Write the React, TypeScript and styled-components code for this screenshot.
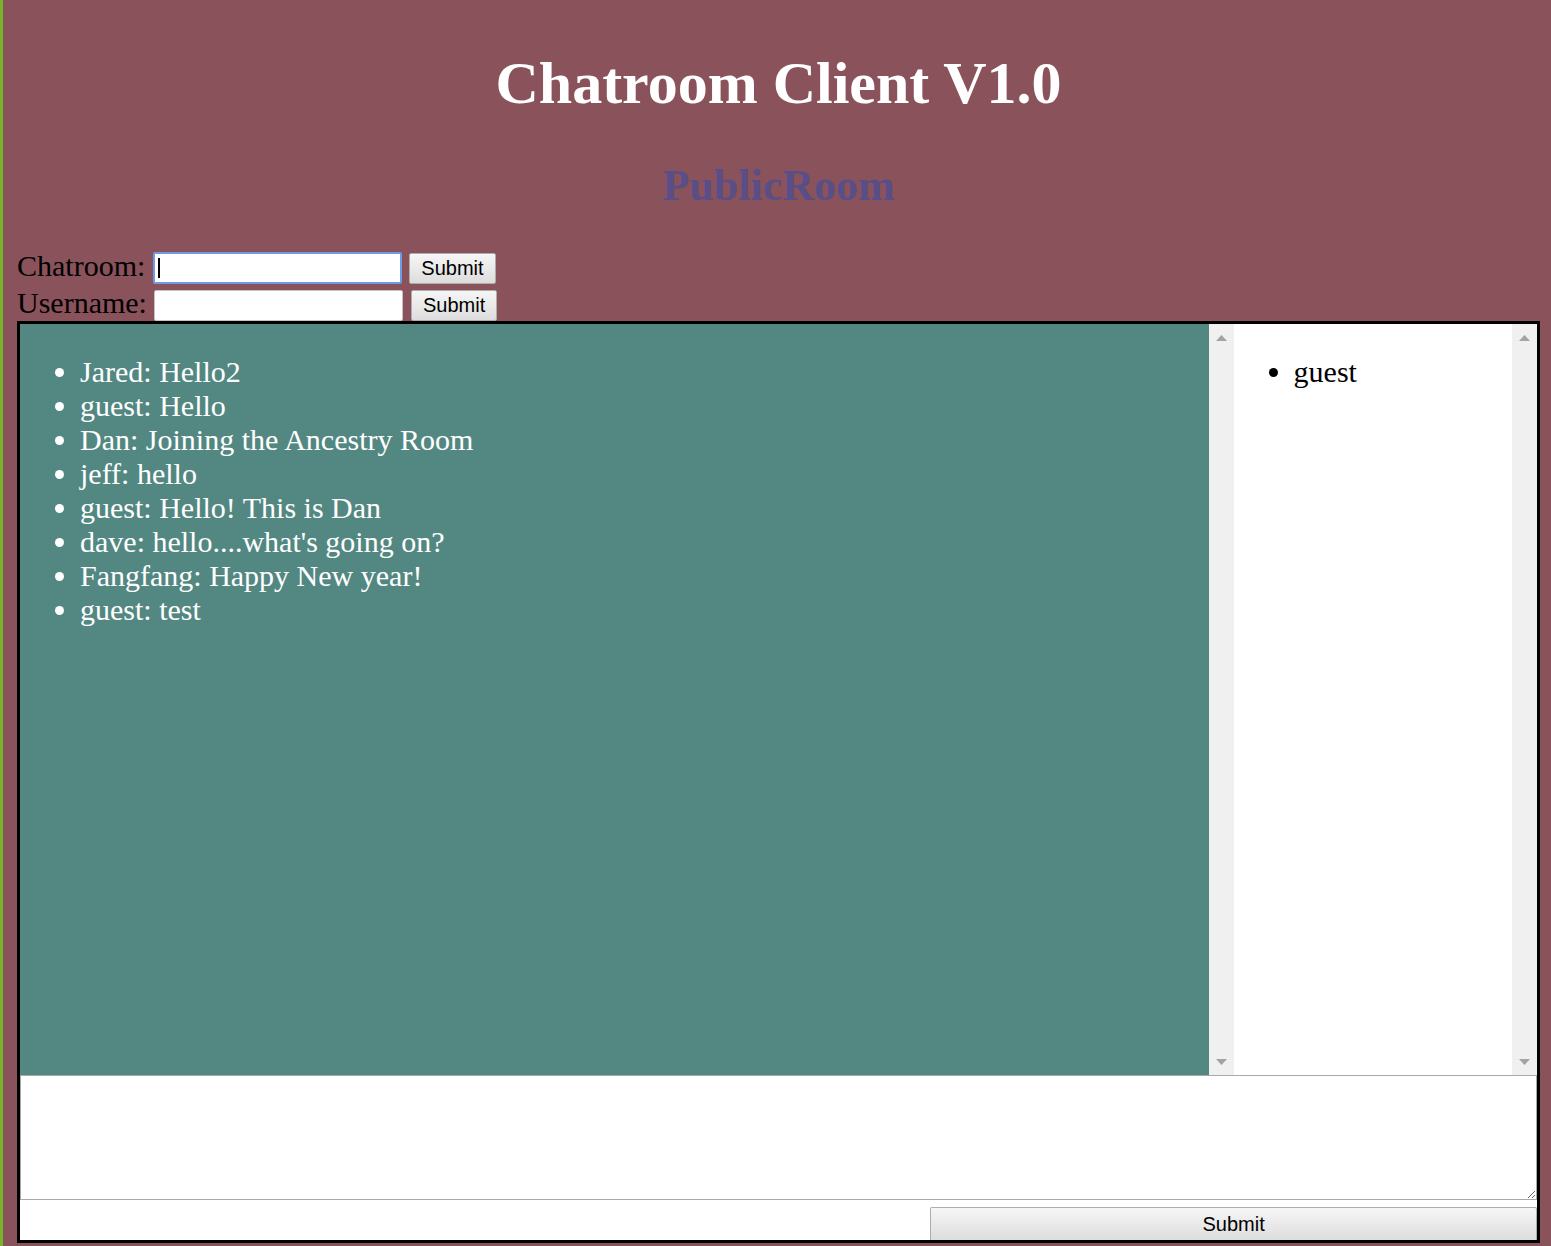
import React from "react";
import styled, { createGlobalStyle } from "styled-components";

const GlobalStyle = createGlobalStyle`
  html, body {
    margin: 0;
    padding: 0;
    background: #8a525b;
  }
  body {
    font-family: "Liberation Serif", "Times New Roman", serif;
  }
  *, *::before, *::after {
    box-sizing: border-box;
  }
`;

const Page = styled.div`
  min-height: 100vh;
  border-left: 3px solid #78b428;
  padding: 48px 11px 3px 14px;
`;

const Title = styled.h1`
  margin: 0;
  text-align: center;
  color: #ffffff;
  font-size: 60px;
  line-height: 70px;
  font-weight: 700;
`;

const RoomName = styled.h2`
  margin: 43px 0 0;
  text-align: center;
  color: #594e87;
  font-size: 44px;
  line-height: 50px;
  font-weight: 700;
`;

const Controls = styled.div`
  margin-top: 36px;
  display: flex;
  flex-direction: column;
`;

const Row = styled.div`
  display: flex;
  align-items: flex-end;
  gap: 7.5px;
  height: 37px;
`;

const Label = styled.label`
  font-size: 30px;
  line-height: 37px;
  color: #000;
`;

const TextInput = styled.input<{ $focused?: boolean }>`
  width: 249px;
  height: ${(p) => (p.$focused ? "32px" : "31px")};
  margin: 0;
  padding: 0 4px;
  background: ${(p) =>
    p.$focused
      ? "linear-gradient(#000, #000) no-repeat 3px 50% / 2px 20px, #fff"
      : "#fff"};
  border: ${(p) => (p.$focused ? "2px solid #6d9be6" : "1px solid #c4c4c4")};
  border-radius: 2px;
  outline: none;
  font-size: 20px;
`;

const SmallButton = styled.button`
  height: 31px;
  margin: 0;
  padding: 0 11px;
  font-family: "Liberation Sans", Arial, sans-serif;
  font-size: 20px;
  color: #000;
  background: linear-gradient(#f6f6f6, #dddddd);
  border: 1px solid #adadad;
  border-radius: 2px;
`;

const ChatBox = styled.div`
  width: 1523px;
  border: 3px solid #000;
  background: #fff;
  display: flex;
  flex-direction: column;
`;

const Panels = styled.div`
  display: grid;
  grid-template-columns: 80% 20%;
  height: 751px;
`;

const Pane = styled.div<{ $bg: string }>`
  display: flex;
  background: ${(p) => p.$bg};
  min-width: 0;
`;

const List = styled.ul<{ $color: string }>`
  flex: 1;
  margin: 0;
  padding: 31px 0 0 60px;
  font-size: 30px;
  line-height: 34px;
  color: ${(p) => p.$color};
  list-style: disc;
`;

const ScrollTrack = styled.div`
  width: 25px;
  flex: 0 0 25px;
  background: #f0f0f0;
  display: flex;
  flex-direction: column;
  justify-content: space-between;
  align-items: center;
  padding: 11px 0 10px;
`;

const Arrow = ({ down }: { down?: boolean }) => (
  <svg width="11" height="6" viewBox="0 0 11 6">
    <polygon
      points={down ? "0,0 11,0 5.5,6" : "0,6 11,6 5.5,0"}
      fill="#a3a3a3"
    />
  </svg>
);

const MessageInput = styled.textarea`
  display: block;
  width: 100%;
  height: 125px;
  margin: 0;
  border: 1px solid #a9a9a9;
  background: #fff;
  font-family: "Liberation Sans", Arial, sans-serif;
  font-size: 16px;
`;

const ButtonRow = styled.div`
  height: 40px;
  padding-top: 7px;
  display: flex;
  justify-content: flex-end;
  align-items: flex-start;
`;

const SendButton = styled.button`
  width: 40%;
  height: 33px;
  margin: 0;
  font-family: "Liberation Sans", Arial, sans-serif;
  font-size: 20px;
  color: #000;
  background: linear-gradient(#f6f6f6, #dddddd);
  border: 1px solid #adadad;
  border-bottom: none;
  border-radius: 2px 2px 0 0;
`;

const messages = [
  "Jared: Hello2",
  "guest: Hello",
  "Dan: Joining the Ancestry Room",
  "jeff: hello",
  "guest: Hello! This is Dan",
  "dave: hello....what's going on?",
  "Fangfang: Happy New year!",
  "guest: test",
];

const users = ["guest"];

const Scrollbar = () => (
  <ScrollTrack>
    <Arrow />
    <Arrow down />
  </ScrollTrack>
);

export default function App() {
  return (
    <>
      <GlobalStyle />
      <Page>
        <Title>Chatroom Client V1.0</Title>
        <RoomName>PublicRoom</RoomName>
        <Controls>
          <Row>
            <Label>Chatroom:</Label>
            <TextInput $focused />
            <SmallButton>Submit</SmallButton>
          </Row>
          <Row>
            <Label>Username:</Label>
            <TextInput />
            <SmallButton>Submit</SmallButton>
          </Row>
        </Controls>
        <ChatBox>
          <Panels>
            <Pane $bg="#538882">
              <List $color="#ffffff">
                {messages.map((m, i) => (
                  <li key={i}>{m}</li>
                ))}
              </List>
              <Scrollbar />
            </Pane>
            <Pane $bg="#ffffff">
              <List $color="#000000">
                {users.map((u) => (
                  <li key={u}>{u}</li>
                ))}
              </List>
              <Scrollbar />
            </Pane>
          </Panels>
          <MessageInput />
          <ButtonRow>
            <SendButton>Submit</SendButton>
          </ButtonRow>
        </ChatBox>
      </Page>
    </>
  );
}
